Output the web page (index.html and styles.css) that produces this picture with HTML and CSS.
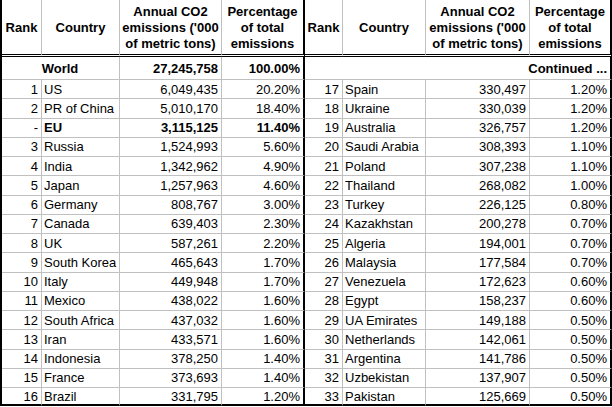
FILE: index.html
```html
<!DOCTYPE html>
<html>
<head>
<meta charset="utf-8">
<link rel="stylesheet" href="styles.css">
</head>
<body>
<table class="sheet">
  <colgroup>
    <col class="c-rank"><col class="c-country"><col class="c-em"><col class="c-pct">
    <col class="c-rank2"><col class="c-country2"><col class="c-em2"><col class="c-pct2">
  </colgroup>
  <thead>
    <tr class="head">
      <th>Rank</th><th>Country</th><th>Annual CO2<br>emissions ('000<br>of metric tons)</th><th class="split">Percentage<br>of total<br>emissions</th>
      <th>Rank</th><th>Country</th><th>Annual CO2<br>emissions ('000<br>of metric tons)</th><th class="end">Percentage<br>of total<br>emissions</th>
    </tr>
  </thead>
  <tbody>
    <tr class="world">
      <td colspan="2" class="center">World</td><td class="num">27,245,758</td><td class="num split">100.00%</td>
      <td colspan="4" class="num end">Continued ...</td>
    </tr>
    <tr><td class="num">1</td><td>US</td><td class="num">6,049,435</td><td class="num split">20.20%</td><td class="num">17</td><td>Spain</td><td class="num">330,497</td><td class="num end">1.20%</td></tr>
    <tr><td class="num">2</td><td>PR of China</td><td class="num">5,010,170</td><td class="num split">18.40%</td><td class="num">18</td><td>Ukraine</td><td class="num">330,039</td><td class="num end">1.20%</td></tr>
    <tr><td class="num">-</td><td class="bold">EU</td><td class="num bold">3,115,125</td><td class="num split bold">11.40%</td><td class="num">19</td><td>Australia</td><td class="num">326,757</td><td class="num end">1.20%</td></tr>
    <tr><td class="num">3</td><td>Russia</td><td class="num">1,524,993</td><td class="num split">5.60%</td><td class="num">20</td><td>Saudi Arabia</td><td class="num">308,393</td><td class="num end">1.10%</td></tr>
    <tr><td class="num">4</td><td>India</td><td class="num">1,342,962</td><td class="num split">4.90%</td><td class="num">21</td><td>Poland</td><td class="num">307,238</td><td class="num end">1.10%</td></tr>
    <tr><td class="num">5</td><td>Japan</td><td class="num">1,257,963</td><td class="num split">4.60%</td><td class="num">22</td><td>Thailand</td><td class="num">268,082</td><td class="num end">1.00%</td></tr>
    <tr><td class="num">6</td><td>Germany</td><td class="num">808,767</td><td class="num split">3.00%</td><td class="num">23</td><td>Turkey</td><td class="num">226,125</td><td class="num end">0.80%</td></tr>
    <tr><td class="num">7</td><td>Canada</td><td class="num">639,403</td><td class="num split">2.30%</td><td class="num">24</td><td>Kazakhstan</td><td class="num">200,278</td><td class="num end">0.70%</td></tr>
    <tr><td class="num">8</td><td>UK</td><td class="num">587,261</td><td class="num split">2.20%</td><td class="num">25</td><td>Algeria</td><td class="num">194,001</td><td class="num end">0.70%</td></tr>
    <tr><td class="num">9</td><td>South Korea</td><td class="num">465,643</td><td class="num split">1.70%</td><td class="num">26</td><td>Malaysia</td><td class="num">177,584</td><td class="num end">0.70%</td></tr>
    <tr><td class="num">10</td><td>Italy</td><td class="num">449,948</td><td class="num split">1.70%</td><td class="num">27</td><td>Venezuela</td><td class="num">172,623</td><td class="num end">0.60%</td></tr>
    <tr><td class="num">11</td><td>Mexico</td><td class="num">438,022</td><td class="num split">1.60%</td><td class="num">28</td><td>Egypt</td><td class="num">158,237</td><td class="num end">0.60%</td></tr>
    <tr><td class="num">12</td><td>South Africa</td><td class="num">437,032</td><td class="num split">1.60%</td><td class="num">29</td><td>UA Emirates</td><td class="num">149,188</td><td class="num end">0.50%</td></tr>
    <tr><td class="num">13</td><td>Iran</td><td class="num">433,571</td><td class="num split">1.60%</td><td class="num">30</td><td>Netherlands</td><td class="num">142,061</td><td class="num end">0.50%</td></tr>
    <tr><td class="num">14</td><td>Indonesia</td><td class="num">378,250</td><td class="num split">1.40%</td><td class="num">31</td><td>Argentina</td><td class="num">141,786</td><td class="num end">0.50%</td></tr>
    <tr><td class="num">15</td><td>France</td><td class="num">373,693</td><td class="num split">1.40%</td><td class="num">32</td><td>Uzbekistan</td><td class="num">137,907</td><td class="num end">0.50%</td></tr>
    <tr class="last"><td class="num">16</td><td>Brazil</td><td class="num">331,795</td><td class="num split">1.20%</td><td class="num">33</td><td>Pakistan</td><td class="num">125,669</td><td class="num end">0.50%</td></tr>
  </tbody>
</table>
</body>
</html>
```

FILE: styles.css
```css
html, body {
  margin: 0;
  padding: 0;
  background: #ffffff;
}

.sheet {
  border-collapse: separate;
  border-spacing: 0;
  table-layout: fixed;
  width: 612px;
  border-left: 2px solid #000;
  font-family: "Liberation Sans", Arial, sans-serif;
  font-size: 13px;
  color: #000;
}

.c-rank { width: 40px; }
.c-country { width: 78px; }
.c-em { width: 102px; }
.c-pct { width: 83px; }
.c-rank2 { width: 38px; }
.c-country2 { width: 83px; }
.c-em2 { width: 104px; }
.c-pct2 { width: 82px; }

.sheet th,
.sheet td {
  border-right: 1px solid #c0c0c0;
  border-bottom: 1px solid #c0c0c0;
  padding: 0 3px 0 2px;
  line-height: 15px;
  white-space: nowrap;
  overflow: hidden;
  vertical-align: middle;
  text-align: left;
}

.sheet .split,
.sheet .end {
  border-right: 2px solid #000;
}

.head {
  height: 57px;
}

.head th {
  font-weight: bold;
  text-align: center;
  padding: 1px 0 0 0;
  line-height: 16px;
  border-bottom: 3px double #000;
}

.world {
  height: 23px;
}

.world td {
  font-weight: bold;
}

.sheet .center {
  text-align: center;
}

.sheet .num {
  text-align: right;
}

.sheet .bold {
  font-weight: bold;
}

tbody tr {
  height: 19.25px;
}

tbody tr.world {
  height: 23px;
}

tbody tr.last {
  height: 18px;
}

tbody tr.last td {
  border-bottom: 2px solid #000;
}
```
